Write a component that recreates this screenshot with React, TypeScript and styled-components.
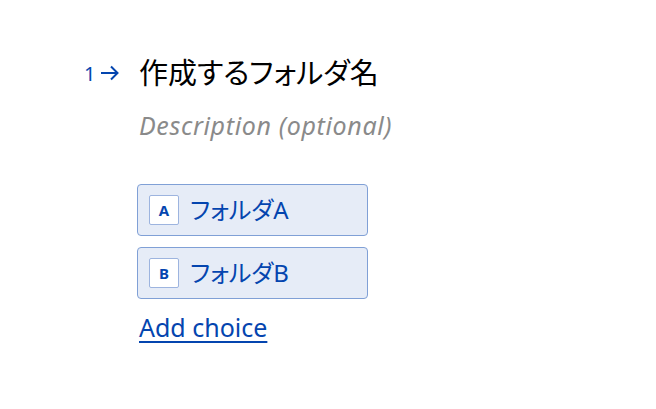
import React from 'react';
import styled, { createGlobalStyle } from 'styled-components';

const GlobalStyle = createGlobalStyle`
  html, body {
    margin: 0;
    padding: 0;
    background: #ffffff;
  }
  body {
    font-family: 'Noto Sans', 'Noto Sans CJK JP', sans-serif;
    font-feature-settings: 'palt';
  }
`;

const choices = [
  { key: 'A', label: 'フォルダA' },
  { key: 'B', label: 'フォルダB' },
];

export default function App() {
  return (
    <>
      <GlobalStyle />
      <Page>
        <Question>
          <Counter>
            <span>1</span>
            <Arrow viewBox="0 0 20 20">
              <path d="M1 10h16.5M11 3.5l6.5 6.5-6.5 6.5" />
            </Arrow>
          </Counter>
          <Body>
            <Title>作成するフォルダ名</Title>
            <Description>Description (optional)</Description>
            <ChoiceList>
              {choices.map((c) => (
                <Choice key={c.key}>
                  <KeyBox>{c.key}</KeyBox>
                  <ChoiceLabel>{c.label}</ChoiceLabel>
                </Choice>
              ))}
            </ChoiceList>
            <AddChoice>Add choice</AddChoice>
          </Body>
        </Question>
      </Page>
    </>
  );
}

const Page = styled.main`
  width: 656px;
  height: 409px;
  padding: 53px 0 0 84px;
  box-sizing: border-box;
`;

const Question = styled.section`
  display: flex;
  align-items: flex-start;
`;

const Counter = styled.div`
  display: flex;
  align-items: center;
  gap: 5px;
  width: 55px;
  height: 40px;
  color: #0445af;
  font-size: 20px;
`;

const Arrow = styled.svg`
  width: 20px;
  height: 20px;
  fill: none;
  stroke: #0445af;
  stroke-width: 2;
`;

const Body = styled.div`
  display: flex;
  flex-direction: column;
  align-items: flex-start;
`;

const Title = styled.h1`
  margin: 0;
  font-size: 29px;
  font-weight: 400;
  line-height: 40px;
  color: #000000;
`;

const Description = styled.p`
  margin: 15px 0 0;
  font-size: 25px;
  font-style: italic;
  line-height: 34px;
  letter-spacing: 0.65px;
  color: #8a8a8a;
`;

const ChoiceList = styled.div`
  display: flex;
  flex-direction: column;
  gap: 11px;
  margin-top: 42px;
  margin-left: -2px;
`;

const Choice = styled.div`
  display: flex;
  align-items: center;
  gap: 11px;
  width: 231px;
  height: 52px;
  box-sizing: border-box;
  padding: 0 11px;
  background: #e6ecf7;
  border: 1px solid #80a0d6;
  border-radius: 4px;
`;

const KeyBox = styled.span`
  display: flex;
  align-items: center;
  justify-content: center;
  width: 30px;
  height: 30px;
  box-sizing: border-box;
  background: #ffffff;
  border: 1px solid #9db4df;
  border-radius: 2px;
  color: #0445af;
  font-size: 15px;
  font-weight: 700;
`;

const ChoiceLabel = styled.span`
  color: #0445af;
  font-size: 24px;
  line-height: 34px;
`;

const AddChoice = styled.a`
  margin-top: 11px;
  color: #0445af;
  font-size: 25px;
  line-height: 34px;
  text-decoration: underline;
  text-decoration-thickness: 2px;
  text-underline-offset: 4px;
  cursor: pointer;
`;
